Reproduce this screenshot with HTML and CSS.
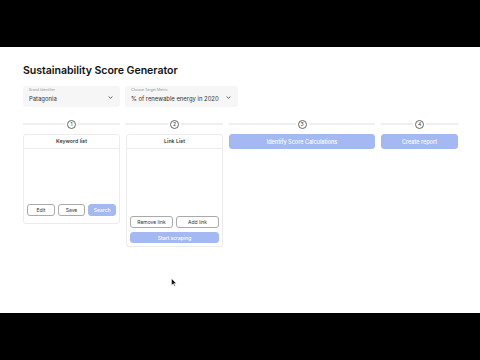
FILE: index.html
```html
<!DOCTYPE html>
<html>
<head>
<meta charset="utf-8">
<link rel="stylesheet" href="styles.css">
</head>
<body>
<div class="bar"></div>
<main class="page">
  <h1 class="title">Sustainability Score Generator</h1>
  <div class="selects">
    <div class="select s1">
      <span class="sel-label">Brand Identifier</span>
      <span class="sel-value">Patagonia</span>
      <svg class="chev" width="5" height="3" viewBox="0 0 5 3"><path d="M0.6 0.6 L2.5 2.3 L4.4 0.6" fill="none" stroke="#444" stroke-width="0.8"/></svg>
    </div>
    <div class="select s2">
      <span class="sel-label">Choose Target Metric</span>
      <span class="sel-value">% of renewable energy in 2020</span>
      <svg class="chev" width="5" height="3" viewBox="0 0 5 3"><path d="M0.6 0.6 L2.5 2.3 L4.4 0.6" fill="none" stroke="#444" stroke-width="0.8"/></svg>
    </div>
  </div>
  <div class="grid">
    <div class="step"><span class="circle">1</span></div>
    <div class="step"><span class="circle">2</span></div>
    <div class="step"><span class="circle">3</span></div>
    <div class="step"><span class="circle">4</span></div>

    <div class="col">
      <div class="card c1">
        <div class="card-head">Keyword list</div>
        <div class="card-body">
          <div class="btn-row">
            <button class="btn">Edit</button>
            <button class="btn">Save</button>
            <button class="btn primary">Search</button>
          </div>
        </div>
      </div>
    </div>
    <div class="col">
      <div class="card c2">
        <div class="card-head">Link List</div>
        <div class="card-body">
          <div class="btn-row">
            <button class="btn">Remove link</button>
            <button class="btn">Add link</button>
          </div>
          <button class="btn primary wide">Start scraping</button>
        </div>
      </div>
    </div>
    <div class="col">
      <button class="btn primary big">Identify Score Calculations</button>
    </div>
    <div class="col">
      <button class="btn primary big">Create report</button>
    </div>
  </div>
  <svg class="cursor" width="6" height="9" viewBox="0 0 6 9"><path d="M0.5 0.5 L0.5 7.5 L2.2 5.8 L3.4 8.3 L4.3 7.9 L3.1 5.4 L5.4 5.4 Z" fill="#111" stroke="#fff" stroke-width="0.5"/></svg>
</main>
<div class="bar"></div>
</body>
</html>
```
FILE: styles.css
```css
html, body {
  margin: 0;
  padding: 0;
}
body {
  width: 480px;
  height: 360px;
  background: #000;
  display: flex;
  flex-direction: column;
  font-family: Inter, "Liberation Sans", sans-serif;
  color: #1d1d1f;
  overflow: hidden;
}
.bar {
  height: 47px;
  flex: 0 0 47px;
  background: #000;
}
.page {
  position: relative;
  flex: 0 0 266px;
  height: 266px;
  background: #fff;
  padding: 16px 0 0 23px;
  box-sizing: border-box;
}
.title {
  margin: 0;
  font-size: 10.6px;
  line-height: 16px;
  font-weight: 600;
  letter-spacing: -0.05px;
  color: #111;
}
.selects {
  display: flex;
  gap: 5px;
  margin-top: 7px;
}
.select {
  position: relative;
  height: 21px;
  background: #f6f6f6;
  border-radius: 3px;
  box-sizing: border-box;
  padding: 2px 0 0 6px;
  display: flex;
  flex-direction: column;
}
.s1 { width: 97px; }
.s2 { width: 113px; }
.sel-label {
  font-size: 3.6px;
  line-height: 5px;
  color: #999;
}
.sel-value {
  font-size: 5.9px;
  line-height: 10px;
  color: #333;
  margin-top: 1px;
}
.chev {
  position: absolute;
  right: 7px;
  top: 10px;
}
.grid {
  display: grid;
  grid-template-columns: 97px 97px 146px 77px;
  column-gap: 6px;
  margin-top: 12px;
}
.step {
  height: 11px;
  display: flex;
  align-items: center;
  justify-content: center;
  background: linear-gradient(#fff 0 4.5px, #efefef 4.5px 6.5px, #fff 6.5px);
  margin-bottom: 4px;
}
.circle {
  width: 9px;
  height: 9px;
  box-sizing: border-box;
  border: 0.8px solid #666;
  border-radius: 50%;
  background: #fff;
  box-shadow: 0 0 0 2px #fff;
  font-size: 5px;
  line-height: 7.5px;
  text-align: center;
  color: #333;
}
.col {
  display: flex;
  flex-direction: column;
}
.card {
  border: 1px solid #ececec;
  border-radius: 3px;
  display: flex;
  flex-direction: column;
}
.card-head {
  height: 13px;
  border-bottom: 1px solid #ececec;
  font-size: 5.3px;
  font-weight: 500;
  line-height: 13px;
  text-align: center;
  color: #222;
}
.card-body {
  display: flex;
  flex-direction: column;
  justify-content: flex-end;
  gap: 4px;
  padding: 0 3px 6px 3px;
}
.c1 .card-body { height: 74px; box-sizing: border-box; padding-bottom: 7px; }
.c2 .card-body { height: 97px; box-sizing: border-box; padding-bottom: 3px; }
.btn-row {
  display: flex;
  gap: 3px;
}
.btn-row .btn { flex: 1; }
.btn {
  font-family: inherit;
  height: 12px;
  padding: 0;
  border: 0.8px solid #aaa;
  border-radius: 3px;
  background: #fff;
  font-size: 5px;
  color: #333;
  cursor: default;
}
.btn.primary {
  background: #a4b8f3;
  border-color: #a4b8f3;
  color: #fff;
  font-weight: 500;
}
.btn.wide {
  height: 11px;
}
.btn.big {
  height: 15px;
  font-size: 5.5px;
}
.cursor {
  position: absolute;
  left: 171px;
  top: 231px;
}
```
